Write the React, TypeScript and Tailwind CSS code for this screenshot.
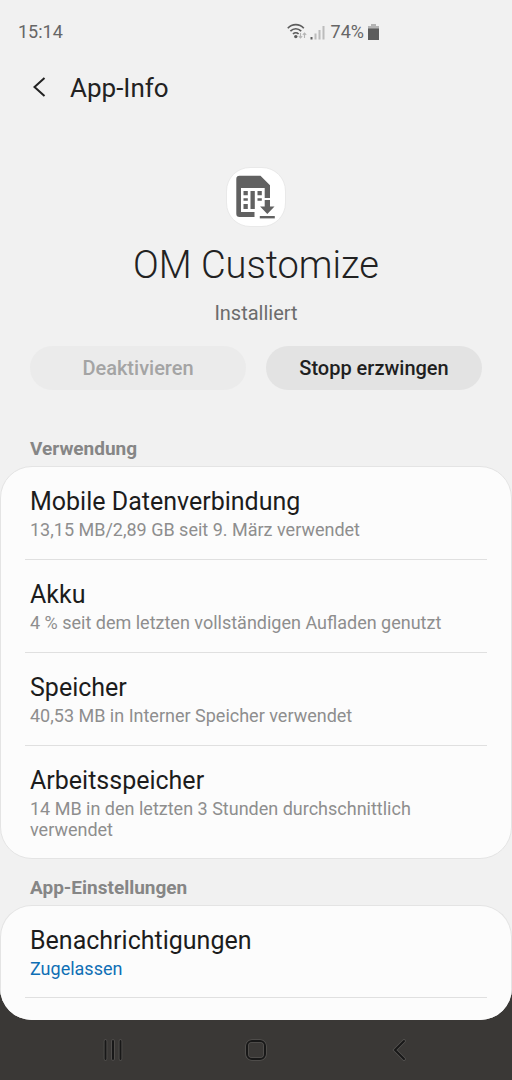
import React from "react";

type Item = {
  title: string;
  detail: string;
  active?: boolean;
};

const usage: Item[] = [
  { title: "Mobile Datenverbindung", detail: "13,15 MB/2,89 GB seit 9. März verwendet" },
  { title: "Akku", detail: "4 % seit dem letzten vollständigen Aufladen genutzt" },
  { title: "Speicher", detail: "40,53 MB in Interner Speicher verwendet" },
  { title: "Arbeitsspeicher", detail: "14 MB in den letzten 3 Stunden durchschnittlich verwendet" },
];

const settings: Item[] = [{ title: "Benachrichtigungen", detail: "Zugelassen", active: true }];

function StatusBar() {
  return (
    <div className="flex h-16 items-center justify-between pl-[18px] pr-[133px] text-lg text-[#666]">
      <span>15:14</span>
      <div className="flex items-center">
        <svg width="40" height="20" viewBox="0 0 40 20" fill="none" aria-hidden="true">
          {/* wifi */}
          <g stroke="#5c5c5c" strokeWidth="1.7">
            <path d="M.8 6.200C5.2 1.400 12.4 1.400 16.800 6.200" />
            <path d="M3.400 9.200C6.600 5.900 11 5.900 14.200 9.200" />
            <path d="M6 12C7.600 10.400 10 10.400 11.600 12" />
          </g>
          <circle cx="8.800" cy="14.600" r="1.700" fill="#5c5c5c" />
          <g stroke="#b4b4b4" strokeWidth="1.1">
            <path d="M13.500 11v4.800M11.800 14.200l1.700 1.700 1.700-1.700M17.500 16v-4.800M15.800 12.800l1.700-1.700 1.700 1.700" />
          </g>
          {/* signal */}
          <path d="M23.500 15h2v2.500h-2z" fill="#5c5c5c" />
          <path d="M27.500 11.500h2v6h-2zM31.500 8h2v9.500h-2zM35.500 4h2v13.500h-2z" fill="#bcbcbc" />
        </svg>
        <span className="ml-1">74%</span>
        <svg className="ml-1" width="11" height="16" viewBox="0 0 11 16" aria-hidden="true">
          <path d="M3 0h5v2h3v3H0V2h3z" fill="#b4b4b4" />
          <path d="M0 4.500h11V16H0z" fill="#5c5c5c" />
        </svg>
      </div>
    </div>
  );
}

function AppIcon() {
  return (
    <div className="flex size-[60px] items-center justify-center rounded-[24px] border border-[#e9e9e9] bg-white">
      <svg className="shrink-0" width="58" height="58" viewBox="0 0 58 58" fill="#616161" aria-hidden="true">
        {/* sim card */}
        <path d="M12.500 7.700H33.500L43 17.200V30H37.700V20H14V44H27.500V49H12.500Q9.300 49 9.300 45.800V10.900Q9.300 7.700 12.500 7.700z" />
        <path d="M16.500 23h4.300v4.300h-4.300zM16.500 30.200h4.300v2.500h-4.300zM16.500 36h4.300v5h-4.300z" />
        <path d="M23.500 23h4.300v18h-4.300zM30.500 23h4.300v4.300h-4.300zM30.500 30.200h4.300v2.500h-4.300z" />
        {/* download arrow */}
        <path d="M37.700 32H43v6.500h4.500L40.300 46L33.100 38.500h4.600z" />
        <path d="M32.800 48h15v2.400h-15z" />
      </svg>
    </div>
  );
}

function Row({ title, detail, active }: Item) {
  return (
    <li className="border-b border-[#e0e0e0] py-[19px] last:border-b-0 last:pb-[18px]">
      <a href="#" className="block px-[5px]">
        <span className="block text-[25px] leading-8 text-[#1c1c1c]">{title}</span>
        <span className={`mt-px block text-lg leading-[21px] ${active ? "text-[#0f6fb5]" : "text-[#8e8e8e]"}`}>
          {detail}
        </span>
      </a>
    </li>
  );
}

function SectionTitle({ children }: { children: React.ReactNode }) {
  return <h2 className="px-[30px] text-[19px] leading-6 font-bold text-[#868686]">{children}</h2>;
}

export default function App() {
  return (
    <div className="flex min-h-screen flex-col bg-[#3a3836] font-[Roboto,sans-serif]">
      <div className="flex grow flex-col overflow-hidden rounded-b-[32px] bg-[#f1f1f1]">
        <StatusBar />

        <header className="flex h-12 items-center pl-[30px]">
          <button type="button" aria-label="Zurück" className="flex w-10 items-center">
            <svg width="20" height="24" viewBox="0 0 20 24" fill="none" stroke="#222" strokeWidth="2">
              <path d="M14.500 2L4.500 11L14.500 20" />
            </svg>
          </button>
          <h1 className="text-[26px] leading-8 text-[#222]">App-Info</h1>
        </header>

        <div className="mt-[55px] flex flex-col items-center">
          <AppIcon />
          <p className="mt-[14px] text-[38px] leading-[48px] font-light text-[#222]">OM Customize</p>
          <p className="mt-3 text-xl leading-6 text-[#6c6c6c]">Installiert</p>
        </div>

        <div className="mt-[21px] grid grid-cols-2 gap-5 px-[30px] text-xl font-medium">
          <button type="button" disabled className="h-11 rounded-full bg-[#ebebeb] text-[#a4a4a4]">
            Deaktivieren
          </button>
          <button type="button" className="h-11 rounded-full bg-[#e3e3e3] text-[#1f1f1f]">
            Stopp erzwingen
          </button>
        </div>

        <section className="mt-[47px]">
          <SectionTitle>Verwendung</SectionTitle>
          <ul className="mt-[5px] rounded-[32px] border border-[#e4e4e4] bg-[#fcfcfc] px-6">
            {usage.map((item) => (
              <Row key={item.title} {...item} />
            ))}
          </ul>
        </section>

        <section className="mt-[17px] flex grow flex-col">
          <SectionTitle>App-Einstellungen</SectionTitle>
          <div className="mt-[5px] grow rounded-t-[32px] border border-b-0 border-[#e4e4e4] bg-[#fcfcfc] px-6 pb-4">
            <ul className="border-b border-[#e0e0e0]">
              {settings.map((item) => (
                <Row key={item.title} {...item} />
              ))}
            </ul>
          </div>
        </section>
      </div>

      <nav className="grid h-[60px] grid-cols-[1fr_60px_1fr] items-center px-[100px]">
        <button type="button" aria-label="Letzte Apps" className="justify-self-start">
          <svg width="26" height="26" viewBox="0 0 26 26" fill="none" strokeLinecap="round">
            <path d="M5.500 4v18M13 4v18M20.500 4v18" stroke="#555351" strokeWidth="3.6" />
            <path d="M5.500 4v18M13 4v18M20.500 4v18" stroke="#181818" strokeWidth="2" />
          </svg>
        </button>
        <button type="button" aria-label="Startseite" className="justify-self-center">
          <svg width="26" height="26" viewBox="0 0 26 26" fill="none">
            <rect x="4" y="4" width="18" height="18" rx="5" stroke="#555351" strokeWidth="3.6" />
            <rect x="4" y="4" width="18" height="18" rx="5" stroke="#181818" strokeWidth="2" />
          </svg>
        </button>
        <button type="button" aria-label="Zurück" className="justify-self-end">
          <svg width="26" height="26" viewBox="0 0 26 26" fill="none" strokeLinecap="round">
            <path d="M18 4L9 13L18 22" stroke="#555351" strokeWidth="3.6" />
            <path d="M18 4L9 13L18 22" stroke="#181818" strokeWidth="2" />
          </svg>
        </button>
      </nav>
    </div>
  );
}
